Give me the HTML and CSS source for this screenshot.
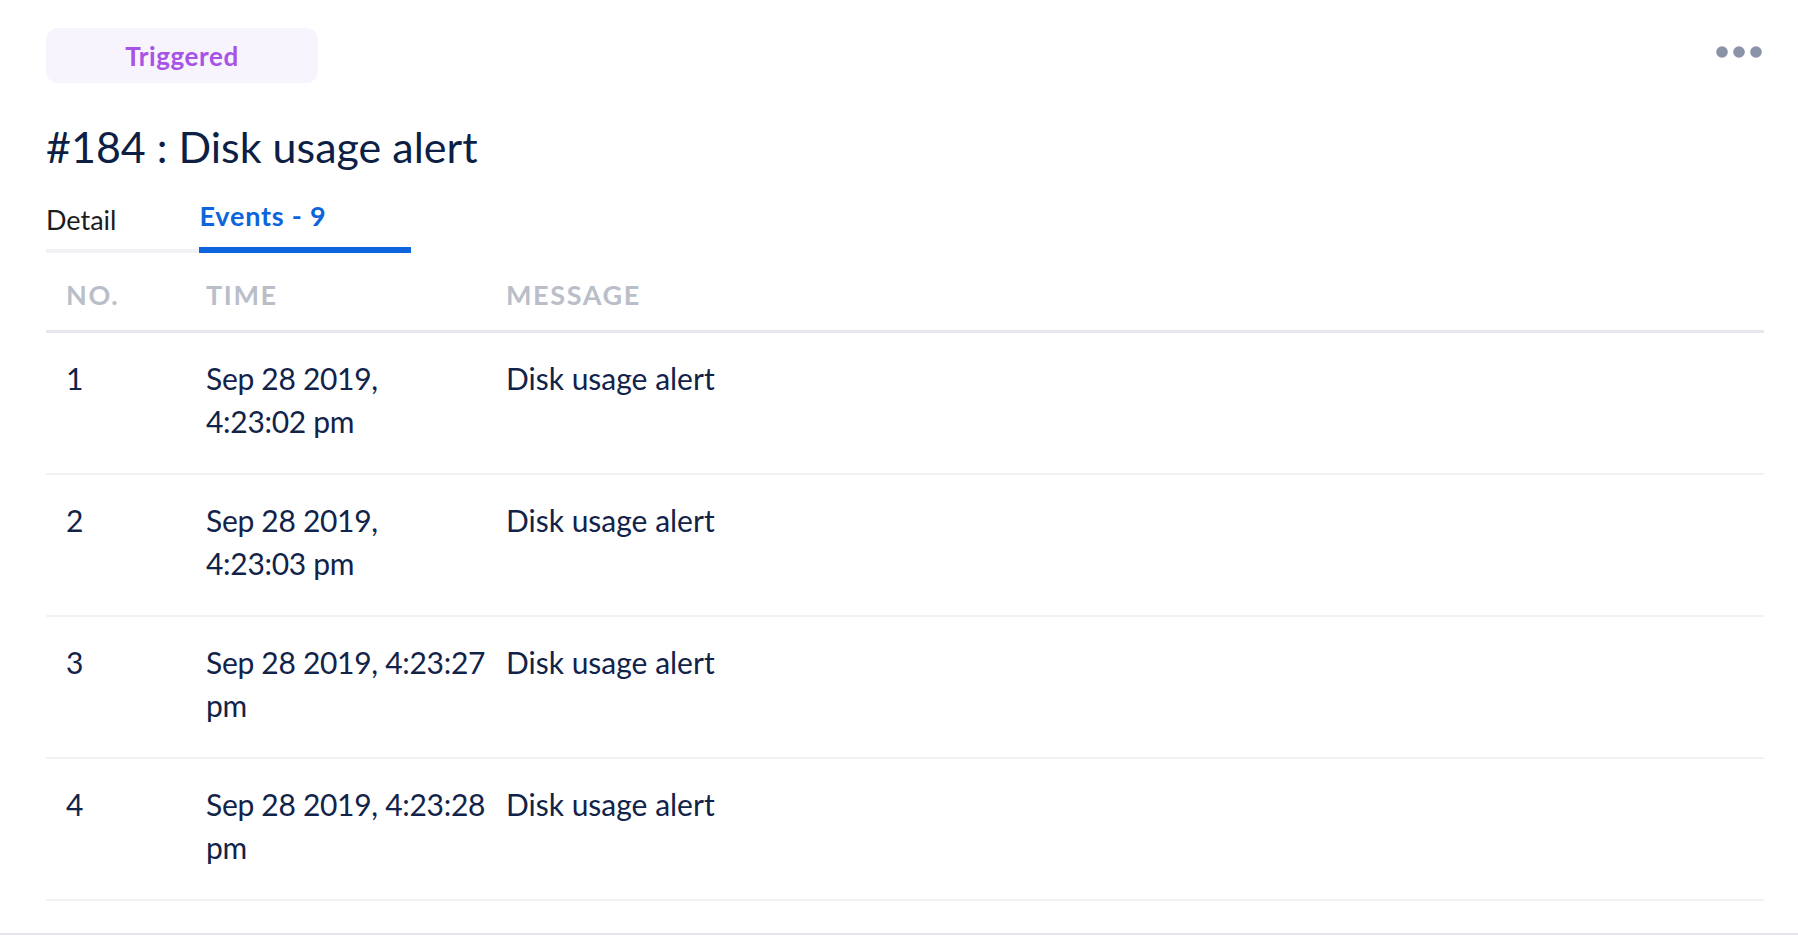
FILE: index.html
```html
<!DOCTYPE html>
<html lang="en">
<head>
<meta charset="utf-8">
<title>#184 : Disk usage alert</title>
<link rel="stylesheet" href="styles.css">
</head>
<body>
<div class="panel">
  <div class="top-row">
    <span class="badge">Triggered</span>
    <button class="more" aria-label="More actions">
      <svg width="46" height="12" viewBox="0 0 46 12"><circle cx="6" cy="6" r="5.8" fill="#8a93a7"/><circle cx="23" cy="6" r="5.8" fill="#8a93a7"/><circle cx="40" cy="6" r="5.8" fill="#8a93a7"/></svg>
    </button>
  </div>
  <h1 class="title">#184 : Disk usage alert</h1>
  <div class="tabs">
    <div class="tab">Detail</div>
    <div class="tab active">Events - 9</div>
  </div>
  <table class="events">
    <thead>
      <tr><th class="c-no">No.</th><th class="c-time">Time</th><th>Message</th></tr>
    </thead>
    <tbody>
      <tr><td>1</td><td class="c-time">Sep 28 2019,<br>4:23:02 pm</td><td>Disk usage alert</td></tr>
      <tr><td>2</td><td class="c-time">Sep 28 2019,<br>4:23:03 pm</td><td>Disk usage alert</td></tr>
      <tr><td>3</td><td class="c-time">Sep 28 2019, 4:23:27<br>pm</td><td>Disk usage alert</td></tr>
      <tr><td>4</td><td class="c-time">Sep 28 2019, 4:23:28<br>pm</td><td>Disk usage alert</td></tr>
    </tbody>
  </table>
</div>
</body>
</html>
```

FILE: styles.css
```css
html, body {
  margin: 0;
  padding: 0;
  background: #ffffff;
}

body {
  font-family: "Lato", "Liberation Sans", sans-serif;
  color: #12234a;
}

.panel {
  padding: 28px 34px 32px 46px;
  border-bottom: 2px solid #e2e4ee;
}

.top-row {
  display: flex;
  justify-content: space-between;
  align-items: flex-start;
}

.badge {
  display: flex;
  align-items: center;
  justify-content: center;
  width: 272px;
  height: 55px;
  border-radius: 12px;
  background: #f8f4fd;
  color: #a653e6;
  font-size: 26px;
  font-weight: 700;
  letter-spacing: 0.6px;
}

.more {
  margin: 18px 2px 0 0;
  padding: 0;
  border: 0;
  background: none;
  line-height: 0;
}

.title {
  margin: 40px 0 0 0;
  font-size: 43px;
  line-height: 48px;
  font-weight: 400;
  color: #0d1f45;
}

.tabs {
  display: flex;
  align-items: flex-end;
  margin-top: 27px;
}

.tab {
  padding: 0 83px 11px 0;
  font-size: 27px;
  line-height: 36px;
  color: #1b1c20;
  border-bottom: 4px solid #f1f2f5;
}

.tab.active {
  padding-bottom: 13px;
  padding-right: 84px;
  color: #0d64dc;
  font-weight: 700;
  letter-spacing: 0.8px;
  border-bottom: 6px solid #0d64dc;
}

.events {
  width: 100%;
  border-collapse: collapse;
  table-layout: fixed;
}

.events th,
.events td {
  text-align: left;
  vertical-align: top;
  padding-left: 20px;
}

.events th {
  padding-top: 21px;
  padding-bottom: 14px;
  font-size: 27px;
  line-height: 42px;
  font-weight: 700;
  color: #b9bec9;
  text-transform: uppercase;
  letter-spacing: 1.6px;
  border-bottom: 3px solid #e6e7ed;
}

.events td {
  padding-top: 24px;
  padding-bottom: 30px;
  font-size: 30px;
  line-height: 43px;
  color: #12234a;
  border-bottom: 2px solid #f2f2f4;
}

.events .c-no {
  width: 119px;
}

.events .c-time {
  width: 279px;
  white-space: nowrap;
}

.events td.c-time {
  letter-spacing: -0.3px;
}
```
